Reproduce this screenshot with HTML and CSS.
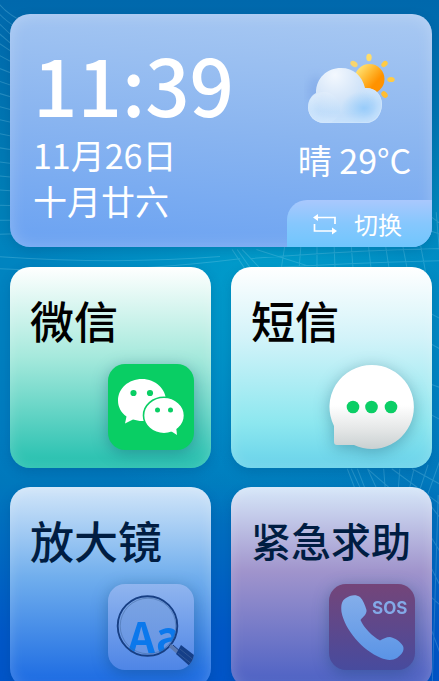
FILE: index.html
```html
<!DOCTYPE html>
<html lang="zh-CN">
<head>
<meta charset="utf-8">
<meta name="viewport" content="width=device-width, initial-scale=1">
<title>桌面</title>
<link rel="stylesheet" href="styles.css">
</head>
<body>
<svg class="mesh" viewBox="0 0 439 681" preserveAspectRatio="xMidYMin slice" aria-hidden="true">
  <g fill="none" stroke="#8fd8ee" stroke-width="1" opacity=".26">
    <path d="M0 2Q8 14 30 24M0 12Q10 24 40 40M0 22L40 60M0 32L40 66M0 42L30 62M0 54L30 70M0 67L30 79M0 80L30 90M0 92L30 101M0 105L30 113M0 118L30 125M0 132L30 138M0 146L30 151M0 160L30 164M0 174L30 177M0 188L30 190M0 203L30 204M0 218L30 218M0 232L30 231"/>
    <path d="M0 254Q120 262 220 254M0 266Q110 272 240 256"/>
    <path d="M232 247L246 268M237 247L252 268M242 247L262 268M256 247L322 268M284 244L280 270M300 244L298 270M316 244L316 270M333 244L334 270M350 244L352 270M367 244L370 270M384 244L388 270M401 244L406 270M418 240L424 272M434 210L439 270M250 256Q350 248 439 246M254 266Q350 260 439 258M420 226L439 232M428 214L439 222"/>
    <path d="M346 464L356 490M350 464L362 490M356 464L366 490M366 464L378 490M382 464L384 490M398 464L396 490M412 464L406 490M426 460L416 490M439 452L424 494M366 464L396 490M390 464L439 500M410 464L439 480"/>
    <path d="M428 310L439 316M428 340L439 346M428 380L439 384M428 410L439 416M428 500L439 514M428 530L439 548M428 560L439 582M428 590L439 600M436 490L430 681M428 620L439 650"/>
  </g>
</svg>
<main class="home">
  <section class="widget">
    <div class="clock">
      <time class="time">11:39</time>
      <span class="date">11月26日</span>
      <span class="date">十月廿六</span>
    </div>
    <div class="weather">
      <svg class="weather-icon" viewBox="0 0 102 80" aria-hidden="true">
        <defs>
          <linearGradient id="sun" x1=".1" y1=".2" x2=".8" y2=".8"><stop offset="0" stop-color="#ffe070"/><stop offset=".45" stop-color="#ffb52c"/><stop offset=".8" stop-color="#ff9200"/></linearGradient>
          <radialGradient id="cloud" gradientUnits="userSpaceOnUse" cx="31" cy="27" r="52"><stop offset="0" stop-color="#f3f8fe"/><stop offset=".45" stop-color="#d7e7f9"/><stop offset="1" stop-color="#b3d7fa"/></radialGradient>
          <radialGradient id="blue"><stop offset="0" stop-color="#98ccfa"/><stop offset="1" stop-color="#a6d2fa" stop-opacity="0"/></radialGradient>
          <linearGradient id="puff" x1="0" y1="0" x2="0" y2="1"><stop offset="0" stop-color="#e6f1fc"/><stop offset=".6" stop-color="#bcdcfb" stop-opacity=".7"/><stop offset="1" stop-color="#d3e7fd"/></linearGradient>
          <filter id="soft" x="-50%" y="-50%" width="200%" height="200%"><feGaussianBlur stdDeviation="4"/></filter>
          <clipPath id="shape"><path d="M20 75C11 75 4 68 4 59C4 52 8 47 12 45C12 30 23 20 37 20C50 20 58 28 61 40C70 39 78 46 78 56C78 67 71 75 62 75Z"/></clipPath>
        </defs>
        <ellipse cx="12" cy="43" rx="8" ry="15" fill="#7198e0" opacity=".35" filter="url(#soft)"/>
        <g fill="#ffcb45"><ellipse cx="65" cy="9.500" rx="2.700" ry="3.700" fill="#ffdd6b"/><ellipse cx="80.500" cy="16" rx="2.600" ry="3.600" transform="rotate(45 80.500 16)"/><ellipse cx="87" cy="31.500" rx="3.700" ry="2.600"/><ellipse cx="80.500" cy="46.500" rx="2.700" ry="3.700" transform="rotate(-40 80.500 46.500)" fill="#ffbd32"/><ellipse cx="50" cy="16" rx="2.700" ry="3.900" transform="rotate(-55 50 16)" fill="#f8d56e"/></g>
        <circle cx="65.500" cy="31" r="15" fill="url(#sun)"/>
        <g clip-path="url(#shape)">
          <rect width="96" height="80" fill="url(#cloud)"/>
          <ellipse cx="60" cy="60" rx="23" ry="17" fill="url(#blue)"/>
          <circle cx="20" cy="60" r="16" fill="url(#puff)" opacity=".5"/>
          <path d="M61 40C70 39 78 46 78 56C78 67 71 75 62 75H20C11 75 4 68 4 59C4 52 8 47 12 45" fill="none" stroke="#e4f1fe" stroke-width="7" opacity=".6" filter="url(#soft)"/>
          <path d="M61 40C70 39 78 46 78 56C78 67 71 75 62 75H20C11 75 4 68 4 59" fill="none" stroke="#dcecfe" stroke-width="1.600" opacity=".5"/>
        </g>
      </svg>
      <span class="temp">晴 29°C</span>
    </div>
    <button class="switch" type="button">
      <svg class="switch-icon" viewBox="0 0 26 22" aria-hidden="true"><path d="M4 4.500H23V11M2.500 11V18H21" fill="none" stroke="#fff" stroke-width="1.700"/><path d="M1 4.500L6 1V8ZM25 18L20 14.500V21.500Z" fill="#fff"/></svg>
      切换
    </button>
  </section>
  <nav class="tiles">
    <a class="tile tile-wechat" href="#wechat">
      <span class="title">微信</span>
      <svg class="icon" viewBox="0 0 86 86" aria-hidden="true">
        <rect width="86" height="86" rx="17" fill="#09ce64"/>
        <path d="M34 15C20.500 15 10 24.500 10 36.500C10 43 13 48.500 18.500 52.500L17 59.500L25 55.500C28 56.300 31 57 34 57C48 57 58 48 58 36.500S47.500 15 34 15Z" fill="#fff"/>
        <ellipse cx="56" cy="51.500" rx="20.500" ry="18.200" fill="#fff" stroke="#09ce64" stroke-width="1.600"/>
        <path d="M62 66.500L69 71L68 62Z" fill="#fff"/>
        <g fill="#09ce64"><circle cx="25.500" cy="29" r="3.100"/><circle cx="42" cy="29" r="3.100"/><circle cx="49.500" cy="46" r="2.500"/><circle cx="62.500" cy="46" r="2.500"/></g>
      </svg>
    </a>
    <a class="tile tile-sms" href="#sms">
      <span class="title">短信</span>
      <svg class="icon" viewBox="0 0 86 86" aria-hidden="true">
        <defs><linearGradient id="bubble" x1="0" y1="0" x2="0" y2="1"><stop offset=".48" stop-color="#fff"/><stop offset=".75" stop-color="#e6e8e8"/><stop offset="1" stop-color="#c9d0d1"/></linearGradient></defs>
        <path d="M43 1A42 42 0 1 1 25 81H8Q5 81 5 78V62A42 42 0 0 1 43 1Z" fill="url(#bubble)"/>
        <g fill="#0bce66"><circle cx="24" cy="43" r="6.300"/><circle cx="42.500" cy="43" r="6.300"/><circle cx="62" cy="43" r="6.300"/></g>
      </svg>
    </a>
    <a class="tile tile-magnifier" href="#magnifier">
      <span class="title">放大镜</span>
      <svg class="icon" viewBox="0 0 86 86" aria-hidden="true">
        <defs>
          <linearGradient id="plate" x1="0" y1="0" x2="0" y2="1"><stop offset="0" stop-color="#90b5ef"/><stop offset="1" stop-color="#4e85e6"/></linearGradient>
          <linearGradient id="glass" x1="0" y1="0" x2="0" y2="1"><stop offset="0" stop-color="#7ba4e3"/><stop offset="1" stop-color="#6694e4"/></linearGradient>
          <clipPath id="lens"><circle cx="39.500" cy="42" r="29"/></clipPath>
          <clipPath id="frame"><rect width="86" height="86" rx="17"/></clipPath>
        </defs>
        <rect width="86" height="86" rx="17" fill="url(#plate)"/>
        <circle cx="39.500" cy="42" r="29" fill="url(#glass)"/>
        <g clip-path="url(#lens)"><text class="lens-text" x="20" y="69">Aa</text></g>
        <g clip-path="url(#frame)">
          <circle cx="39.500" cy="42" r="29.800" fill="none" stroke="#173f84" stroke-width="1.900"/>
          <circle cx="40" cy="42" r="27.800" fill="none" stroke="#42699f" stroke-width="1" opacity=".5"/>
          <path d="M63 60L72 67L69 70L61 63Z" fill="#5b7ab2"/><path d="M65 61L73 68" stroke="#193e80" stroke-width="1"/>
          <path d="M73 61L90 74L85 85L68 70Z" fill="#153f88"/><path d="M72 65L88 78M70 69L86 82" stroke="#45679f" stroke-width="1" opacity=".6"/>
        </g>
      </svg>
    </a>
    <a class="tile tile-sos" href="#sos">
      <span class="title title-long">紧急求助</span>
      <svg class="icon" viewBox="0 0 86 86" aria-hidden="true">
        <defs>
          <linearGradient id="red" x1="0" y1="0" x2="0" y2="1"><stop offset="0" stop-color="#744579"/><stop offset="1" stop-color="#474b9e"/></linearGradient>
          <linearGradient id="phone" x1="0" y1="0" x2="0" y2="1"><stop offset="0" stop-color="#84aeea"/><stop offset="1" stop-color="#5a94e6"/></linearGradient>
        </defs>
        <rect width="86" height="86" rx="17" fill="url(#red)"/>
        <path d="M17 14C21 11 27 10 31 13C34 16 36 21 37.500 26C38 30 34 33 31.500 36C35 44 43 52 51 56.500C54 55 57 53 61 53C66 54 71 57 74 62C76 67 72 71 68 74C63 77 57 76 52 74C33 66 16 46 12.500 28C12 22 12 17 17 14Z" fill="url(#phone)"/>
        <text class="sos-text" x="43" y="30">SOS</text>
      </svg>
    </a>
  </nav>
</main>
</body>
</html>
```
FILE: styles.css
```css
* { box-sizing: border-box; }

html { scrollbar-width: none; }

body {
  margin: 0;
  min-height: 100vh;
  position: relative;
  overflow-x: hidden;
  font-family: "Noto Sans CJK SC", sans-serif;
  background:
    radial-gradient(ellipse 240px 240px at 62% 42%, rgba(0, 176, 212, .6), rgba(0, 176, 212, 0)),
    linear-gradient(180deg, #0068ac 0, #0080b8 30%, #0084c0 38%, #007cc0 62%, #0078bc 70%, #0058c8 92%, #0054c8 100%);
}

.mesh {
  position: absolute;
  inset: 0;
  width: 100%;
  height: 100%;
}

.home {
  position: relative;
  display: flex;
  flex-direction: column;
  gap: 20px;
  padding: 14px 7px 0 10px;
}

.widget {
  display: grid;
  grid-template-columns: 1fr auto;
  grid-template-rows: 1fr auto;
  min-height: 233px;
  overflow: hidden;
  border-radius: 20px;
  color: #fff;
  background: linear-gradient(185deg, #a9c9f2 0, #8ab5f0 50%, #6aa2f2 100%);
  box-shadow: inset 0 0 16px rgba(255, 255, 255, .24), 0 4px 12px rgba(0, 50, 100, .2);
}

.clock {
  grid-row: 1 / 3;
  display: flex;
  flex-direction: column;
  padding: 20px 0 0 23px;
}

.time {
  font-size: 78px;
  line-height: 98px;
  font-weight: 500;
}

.date {
  font-size: 34px;
  line-height: 46px;
  font-weight: 400;
}

.weather {
  display: flex;
  flex-direction: column;
  align-items: center;
  padding: 34px 10px 0 0;
}

.weather-icon {
  width: 102px;
  height: 80px;
}

.temp {
  font-size: 34px;
  line-height: 64px;
  font-weight: 400;
}

.switch {
  display: flex;
  align-items: center;
  justify-content: flex-end;
  gap: 16px;
  width: 145px;
  height: 47px;
  padding: 0 30px 0 0;
  border: 0;
  border-radius: 20px 0 0 0;
  font: 400 24px/47px "Noto Sans CJK SC", sans-serif;
  color: #fff;
  background: linear-gradient(180deg, #a9c8fd 0, #86c7fd 50%, #70c6fd 100%);
}

.switch-icon {
  width: 26px;
  height: 22px;
}

.tiles {
  display: grid;
  grid-template-columns: 1fr 1fr;
  gap: 19px 20px;
}

.tile {
  display: flex;
  flex-direction: column;
  justify-content: space-between;
  aspect-ratio: 1;
  padding: 21px 17px 18px 20px;
  border-radius: 20px;
  color: #000;
  text-decoration: none;
  box-shadow: inset 0 0 14px rgba(255, 255, 255, .2), 0 4px 12px rgba(0, 50, 100, .2);
}

.tile-wechat { background-image: linear-gradient(180deg, #fff 0, #a5e9dc 45%, #22bfae 100%); }
.tile-sms { background-image: linear-gradient(180deg, #fff 0, #d3f3f9 35%, #8ce7ef 78%, #68d2ea 100%); }
.tile-magnifier { background-image: linear-gradient(180deg, #d2e6f9 0, #70aeed 45%, #1868e2 100%); }
.tile-sos { background-image: linear-gradient(180deg, #d6e7f9 0, #a094cc 42%, #4a60c4 100%); }

.tile-magnifier,
.tile-sos { color: #001d42; }

.title {
  font-size: 44px;
  line-height: 64px;
  font-weight: 500;
}

.title-long { font-size: 40px; }

.icon {
  align-self: flex-end;
  width: 86px;
  height: 86px;
  filter: drop-shadow(0 3px 8px rgba(0, 50, 80, .32));
}

.lens-text {
  font: 700 42px "Noto Sans CJK SC", sans-serif;
  fill: #0b78ec;
}

.sos-text {
  font: 700 17px Inter, sans-serif;
  fill: #83a9e7;
}
```
